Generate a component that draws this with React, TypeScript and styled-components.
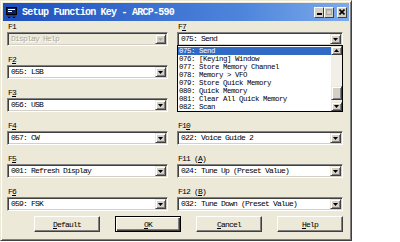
import styled, { createGlobalStyle } from 'styled-components';

const GlobalStyle = createGlobalStyle`
  body {
    margin: 0;
    background: #ffffff;
    font-family: "Liberation Mono", "Noto Sans CJK SC", monospace;
  }
`;

const TEXT = `
  font-family: "Liberation Mono", "Noto Sans CJK SC", monospace;
  font-size: 8px;
  letter-spacing: -0.8px;
`;

// 왼쪽 열 F1~F6
const leftKeys = [
  { name: 'F', mn: '1', value: 'Display Help', disabled: true },
  { name: 'F', mn: '2', value: '055: LSB' },
  { name: 'F', mn: '3', value: '056: USB' },
  { name: 'F', mn: '4', value: '057: CW' },
  { name: 'F', mn: '5', value: '001: Refresh Display' },
  { name: 'F', mn: '6', value: '059: FSK' },
];

// 오른쪽 열 F7~F12 (F8, F9는 열린 목록에 가려져서 안 보임)
const rightKeys = [
  { name: 'F', mn: '7', value: '075: Send', open: true },
  { name: 'F', mn: '8', value: '', covered: true },
  { name: 'F', mn: '9', value: '', covered: true },
  { name: 'F1', mn: '0', value: '022: Voice Guide 2' },
  { name: 'F11 (', mn: 'A', tail: ')', value: '024: Tune Up (Preset Value)' },
  { name: 'F12 (', mn: 'B', tail: ')', value: '032: Tune Down (Preset Value)' },
];

const listItems = [
  '075: Send',
  '076: [Keying] Window',
  '077: Store Memory Channel',
  '078: Memory > VFO',
  '079: Store Quick Memory',
  '080: Quick Memory',
  '081: Clear All Quick Memory',
  '082: Scan',
];

const buttons = [
  { mn: 'D', rest: 'efault' },
  { mn: 'O', rest: 'K', isDefault: true },
  { mn: 'C', rest: 'ancel' },
  { mn: 'H', rest: 'elp' },
];

const Window = styled.div`
  width: 352px;
  height: 241px;
  box-sizing: border-box;
  background: #ece9d8;
  border: 1px solid;
  border-color: #ece9d8 #404040 #404040 #ece9d8;
  box-shadow: inset 1px 1px #ffffff, inset -1px -1px #808080;
  padding: 2px;
  display: flex;
  flex-direction: column;
`;

const TitleBar = styled.div`
  height: 18px;
  display: flex;
  align-items: center;
  padding: 0 2px 0 3px;
  gap: 5px;
  background: linear-gradient(to right, #1d4fbd, #4f86dc 70%, #7eaaea);
`;

const Title = styled.span`
  flex: 1;
  color: #ffffff;
  font-family: "Liberation Mono", monospace;
  font-weight: bold;
  font-size: 10px;
  letter-spacing: -0.76px;
  white-space: nowrap;
`;

const CaptionButtons = styled.div`
  display: flex;
  align-items: center;
`;

const CaptionButton = styled.div<{ $gap?: boolean }>`
  width: 10px;
  height: 11px;
  box-sizing: border-box;
  margin-left: ${({ $gap }) => ($gap ? '3px' : '0')};
  background: #d4d0c8;
  border: 1px solid;
  border-color: #ffffff #404040 #404040 #ffffff;
  display: flex;
  align-items: center;
  justify-content: center;
`;

const Content = styled.div`
  padding: 1px 6px 0 4px;
  display: flex;
  flex-direction: column;
`;

const Columns = styled.div`
  display: flex;
  gap: 9px;
`;

const Column = styled.div<{ $width: number }>`
  width: ${({ $width }) => $width}px;
  display: flex;
  flex-direction: column;
  gap: 9px;
`;

const Field = styled.div<{ $covered?: boolean }>`
  display: flex;
  flex-direction: column;
  visibility: ${({ $covered }) => ($covered ? 'hidden' : 'visible')};
`;

const Label = styled.div`
  ${TEXT}
  height: 9px;
  line-height: 9px;
  margin-bottom: 1px;
  color: #000000;
  padding-left: 1px;
  white-space: nowrap;
  & > u {
    text-underline-offset: 1px;
  }
`;

const Select = styled.div<{ $disabled?: boolean }>`
  position: relative;
  height: 14px;
  box-sizing: border-box;
  border: 1px solid;
  border-color: #808080 #ffffff #ffffff #808080;
  box-shadow: inset 1px 1px #404040, inset -1px -1px #d4d0c8;
  background: ${({ $disabled }) => ($disabled ? '#ece9d8' : '#ffffff')};
  display: flex;
  align-items: center;
  padding: 1px 1px 1px 3px;
`;

const SelectText = styled.span<{ $disabled?: boolean }>`
  ${TEXT}
  flex: 1;
  line-height: 10px;
  white-space: nowrap;
  overflow: hidden;
  color: ${({ $disabled }) => ($disabled ? '#aca899' : '#000000')};
  text-shadow: ${({ $disabled }) => ($disabled ? '1px 1px #ffffff' : 'none')};
`;

const ArrowButton = styled.div<{ $h?: number }>`
  width: 11px;
  height: ${({ $h }) => $h ?? 10}px;
  box-sizing: border-box;
  background: #d4d0c8;
  border: 1px solid;
  border-color: #ece9d8 #404040 #404040 #ece9d8;
  box-shadow: inset 1px 1px #ffffff, inset -1px -1px #808080;
  display: flex;
  align-items: center;
  justify-content: center;
  flex-shrink: 0;
`;

const DropList = styled.div`
  position: absolute;
  left: -1px;
  right: -1px;
  top: 100%;
  height: 67px;
  box-sizing: border-box;
  background: #ffffff;
  border: 1px solid #000000;
  display: flex;
  z-index: 2;
  visibility: visible;
`;

const Items = styled.div`
  flex: 1;
  padding-top: 1px;
  overflow: hidden;
`;

const Item = styled.div<{ $selected?: boolean }>`
  font-family: "Liberation Mono", "Noto Sans CJK SC", monospace;
  font-size: 7.4px;
  letter-spacing: -0.44px;
  height: 8px;
  line-height: 8px;
  padding-left: 1px;
  white-space: nowrap;
  color: ${({ $selected }) => ($selected ? '#ffffff' : '#000000')};
  background: ${({ $selected }) => ($selected ? '#316ac5' : 'transparent')};
`;

const ScrollBar = styled.div`
  width: 11px;
  display: flex;
  flex-direction: column;
  background: #f1efe6;
`;

const Track = styled.div`
  flex: 1;
  display: flex;
  flex-direction: column;
  padding-top: 31px;
`;

const Thumb = styled.div`
  height: 14px;
  box-sizing: border-box;
  background: #d4d0c8;
  border: 1px solid;
  border-color: #ece9d8 #404040 #404040 #ece9d8;
  box-shadow: inset 1px 1px #ffffff, inset -1px -1px #808080;
`;

const ButtonRow = styled.div`
  display: grid;
  grid-template-columns: repeat(4, 66px);
  column-gap: 15px;
  justify-content: end;
  margin-top: 5px;
`;

const Button = styled.div<{ $default?: boolean }>`
  ${TEXT}
  height: 16px;
  box-sizing: border-box;
  display: flex;
  align-items: center;
  justify-content: center;
  color: #000000;
  background: #ece9d8;
  border: 1px solid;
  border-color: ${({ $default }) =>
    $default ? '#000000' : '#ffffff #404040 #404040 #ffffff'};
  box-shadow: ${({ $default }) =>
    $default
      ? 'inset 1px 1px #ffffff, inset -1px -1px #404040, inset -2px -2px #808080'
      : 'inset -1px -1px #808080'};
  & > u {
    text-underline-offset: 1px;
  }
`;

const DownTriangle = ({ color = '#000' }: { color?: string }) => (
  <svg width="5" height="3" viewBox="0 0 5 3">
    <polygon points="0,0 5,0 2.5,3" fill={color} />
  </svg>
);

const UpTriangle = () => (
  <svg width="5" height="3" viewBox="0 0 5 3">
    <polygon points="0,3 5,3 2.5,0" fill="#000" />
  </svg>
);

const AppIcon = () => (
  <svg width="11" height="11" viewBox="0 0 11 11">
    <rect x="0.5" y="0.5" width="10" height="7" fill="#0b1f5c" stroke="#000" />
    <rect x="2" y="2" width="7" height="1" fill="#fff" />
    <rect x="2" y="4" width="4" height="1" fill="#fff" />
    <rect x="1" y="8" width="9" height="2" fill="#1a3a8a" />
    <rect x="2" y="10" width="2" height="1" fill="#000" />
    <rect x="7" y="10" width="2" height="1" fill="#000" />
  </svg>
);

type Key = {
  name: string;
  mn: string;
  tail?: string;
  value: string;
  disabled?: boolean;
  open?: boolean;
  covered?: boolean;
};

const KeyField = ({ k }: { k: Key }) => (
  <Field $covered={k.covered}>
    <Label>
      {k.name}
      {k.disabled ? k.mn : <u>{k.mn}</u>}
      {k.tail}
    </Label>
    <Select $disabled={k.disabled}>
      <SelectText $disabled={k.disabled}>{k.value}</SelectText>
      <ArrowButton>
        <DownTriangle color={k.disabled ? '#aca899' : '#000'} />
      </ArrowButton>
      {k.open && (
        <DropList>
          <Items>
            {listItems.map((item, index) => (
              <Item key={index} $selected={index === 0}>
                {item}
              </Item>
            ))}
          </Items>
          <ScrollBar>
            <ArrowButton $h={9}>
              <UpTriangle />
            </ArrowButton>
            <Track>
              <Thumb />
            </Track>
            <ArrowButton $h={9}>
              <DownTriangle />
            </ArrowButton>
          </ScrollBar>
        </DropList>
      )}
    </Select>
  </Field>
);

const App = () => {
  return (
    <>
      <GlobalStyle />
      <Window>
        <TitleBar>
          <AppIcon />
          <Title>Setup Function Key - ARCP-590</Title>
          <CaptionButtons>
            <CaptionButton>
              <svg width="5" height="6" viewBox="0 0 5 6">
                <rect x="0" y="4" width="5" height="2" fill="#000" />
              </svg>
            </CaptionButton>
            <CaptionButton>
              <svg width="6" height="6" viewBox="0 0 6 6">
                <rect x="0.5" y="0.5" width="5" height="5" fill="none" stroke="#aca899" />
                <rect x="0" y="0" width="6" height="1.5" fill="#aca899" />
              </svg>
            </CaptionButton>
            <CaptionButton $gap>
              <svg width="6" height="6" viewBox="0 0 6 6">
                <path d="M0.5 0.5 L5.5 5.5 M5.5 0.5 L0.5 5.5" stroke="#000" strokeWidth="1.6" />
              </svg>
            </CaptionButton>
          </CaptionButtons>
        </TitleBar>
        <Content>
          <Columns>
            <Column $width={161}>
              {leftKeys.map((k, index) => (
                <KeyField key={index} k={k} />
              ))}
            </Column>
            <Column $width={166}>
              {rightKeys.map((k, index) => (
                <KeyField key={index} k={k} />
              ))}
            </Column>
          </Columns>
          <ButtonRow>
            {buttons.map((b, index) => (
              <Button key={index} $default={b.isDefault}>
                <u>{b.mn}</u>
                {b.rest}
              </Button>
            ))}
          </ButtonRow>
        </Content>
      </Window>
    </>
  );
};

export default App;
